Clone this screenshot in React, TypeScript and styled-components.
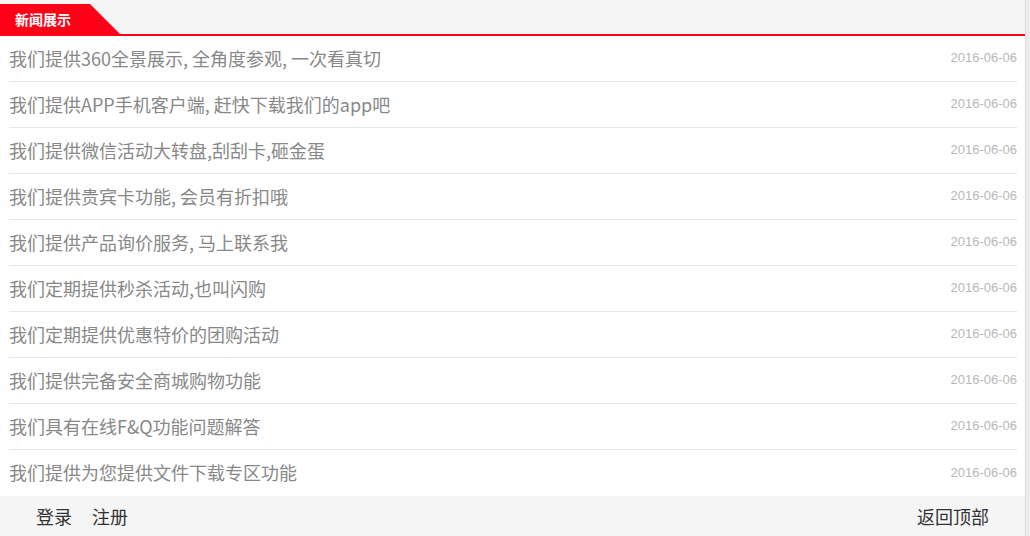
import React from 'react';
import styled, { createGlobalStyle } from 'styled-components';

const GlobalStyle = createGlobalStyle`
  html, body {
    margin: 0;
    padding: 0;
    background: #ececec;
  }
  body {
    font-family: "Microsoft YaHei", "Noto Sans CJK SC", sans-serif;
  }
`;

const Page = styled.div`
  width: 1026px;
  min-height: 536px;
  background: #fff;
  border-right: 1px solid #dcdcdc;
  box-sizing: border-box;
  display: flex;
  flex-direction: column;
`;

const Header = styled.div`
  height: 36px;
  background: #f5f5f5;
  display: flex;
  align-items: flex-end;
  border-bottom: 2px solid #ff0016;
  box-sizing: border-box;
`;

const Tab = styled.div`
  height: 30px;
  width: 120px;
  background: #ff0016;
  clip-path: polygon(0 0, 90px 0, 120px 100%, 0 100%);
  color: #fff;
  font-size: 14px;
  font-weight: bold;
  line-height: 30px;
  padding-left: 15px;
  box-sizing: border-box;
`;

const List = styled.ul`
  list-style: none;
  margin: 0;
  padding: 0 8px 0 9px;
`;

const Row = styled.li<{ $last?: boolean }>`
  height: 46px;
  display: flex;
  align-items: center;
  justify-content: space-between;
  padding-bottom: 2px;
  border-bottom: ${p => (p.$last ? 'none' : '1px solid #e8e8e8')};
  box-sizing: border-box;
`;

const Title = styled.a`
  font-size: 18px;
  color: #888;
  text-decoration: none;
`;

const DateText = styled.span`
  font-family: "Liberation Sans", Arial, sans-serif;
  font-size: 13px;
  color: #b8b8b8;
`;

const Footer = styled.div`
  flex: 1;
  background: #f5f5f5;
  display: flex;
  align-items: center;
  justify-content: space-between;
  padding: 0 36px 4px;
  min-height: 40px;
`;

const FooterLinks = styled.div`
  display: flex;
  gap: 20px;
`;

const FooterLink = styled.a`
  font-size: 18px;
  color: #333;
  text-decoration: none;
`;

const news = [
  '我们提供360全景展示, 全角度参观, 一次看真切',
  '我们提供APP手机客户端, 赶快下载我们的app吧',
  '我们提供微信活动大转盘,刮刮卡,砸金蛋',
  '我们提供贵宾卡功能, 会员有折扣哦',
  '我们提供产品询价服务, 马上联系我',
  '我们定期提供秒杀活动,也叫闪购',
  '我们定期提供优惠特价的团购活动',
  '我们提供完备安全商城购物功能',
  '我们具有在线F&Q功能问题解答',
  '我们提供为您提供文件下载专区功能',
];

export default function App() {
  return (
    <>
      <GlobalStyle />
      <Page>
        <Header>
          <Tab>新闻展示</Tab>
        </Header>
        <List>
          {news.map((title, i) => (
            <Row key={i} $last={i === news.length - 1}>
              <Title href="#">{title}</Title>
              <DateText>2016-06-06</DateText>
            </Row>
          ))}
        </List>
        <Footer>
          <FooterLinks>
            <FooterLink href="#">登录</FooterLink>
            <FooterLink href="#">注册</FooterLink>
          </FooterLinks>
          <FooterLink href="#">返回顶部</FooterLink>
        </Footer>
      </Page>
    </>
  );
}
